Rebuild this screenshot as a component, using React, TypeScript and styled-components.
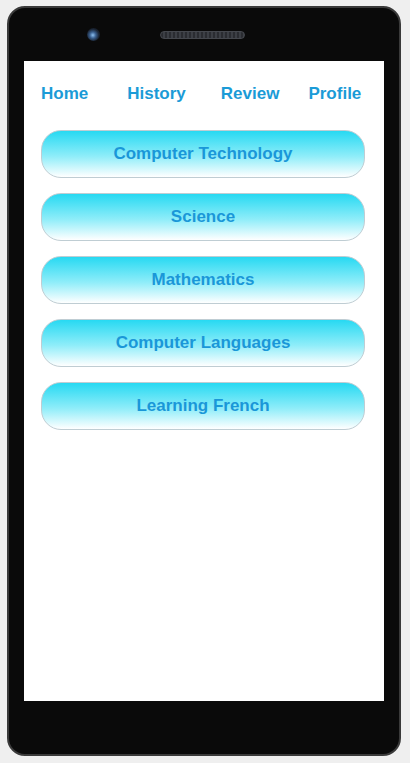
import styled, { createGlobalStyle } from 'styled-components';

const GlobalStyle = createGlobalStyle`
  html, body {
    margin: 0;
    padding: 0;
    background: #efefef;
  }
  body {
    font-family: "Liberation Sans", Arial, sans-serif;
  }
`;

const Phone = styled.div`
  box-sizing: border-box;
  width: 394px;
  height: 750px;
  margin: 6px 0 0 7px;
  background: #0a0a0a;
  border: 2px solid #3a3a3a;
  border-radius: 18px;
  display: flex;
  flex-direction: column;
  padding: 0 15px;
`;

const TopBar = styled.div`
  height: 53px;
  display: flex;
  align-items: center;
  padding-left: 63px;
  gap: 60px;
`;

const Camera = styled.div`
  width: 13px;
  height: 13px;
  border-radius: 50%;
  background: radial-gradient(circle at 45% 55%, #8cc0f0 0%, #3a6090 30%, #1a2433 60%, #0d0f13 100%);
`;

const Speaker = styled.div`
  box-sizing: border-box;
  width: 85px;
  height: 8px;
  border-radius: 4px;
  background: repeating-linear-gradient(to right, #2a2c31 0 2px, #3c3f45 2px 4px);
  border: 1px solid #45484e;
`;

const Screen = styled.div`
  height: 640px;
  background: #ffffff;
  padding: 0 19px 0 17px;
`;

const Nav = styled.nav`
  height: 66px;
  display: flex;
  align-items: center;
`;

const NavLink = styled.a<{ $lead: number }>`
  margin-left: ${(p) => p.$lead}px;
  font-size: 17px;
  font-weight: bold;
  color: #1b9bd7;
  text-decoration: none;
  cursor: pointer;
`;

const Subjects = styled.div`
  margin-top: 3px;
  display: flex;
  flex-direction: column;
  gap: 15px;
`;

const SubjectButton = styled.button`
  box-sizing: border-box;
  height: 48px;
  width: 100%;
  border: 1px solid #bfcdd3;
  border-radius: 20px;
  background: linear-gradient(to bottom, #27d9f2 0%, #8fedf9 55%, #ffffff 100%);
  font-family: "Liberation Sans", Arial, sans-serif;
  font-size: 17px;
  font-weight: bold;
  color: #1a97d8;
  cursor: pointer;
`;

const links = [
  { label: 'Home', lead: 0 },
  { label: 'History', lead: 39 },
  { label: 'Review', lead: 35 },
  { label: 'Profile', lead: 29 },
];

const subjects = ['Computer Technology', 'Science', 'Mathematics', 'Computer Languages', 'Learning French'];

export default function App() {
  return (
    <>
      <GlobalStyle />
      <Phone>
        <TopBar>
          <Camera />
          <Speaker />
        </TopBar>
        <Screen>
          <Nav>
            {links.map((l) => (
              <NavLink key={l.label} $lead={l.lead}>
                {l.label}
              </NavLink>
            ))}
          </Nav>
          <Subjects>
            {subjects.map((s) => (
              <SubjectButton key={s}>{s}</SubjectButton>
            ))}
          </Subjects>
        </Screen>
      </Phone>
    </>
  );
}
